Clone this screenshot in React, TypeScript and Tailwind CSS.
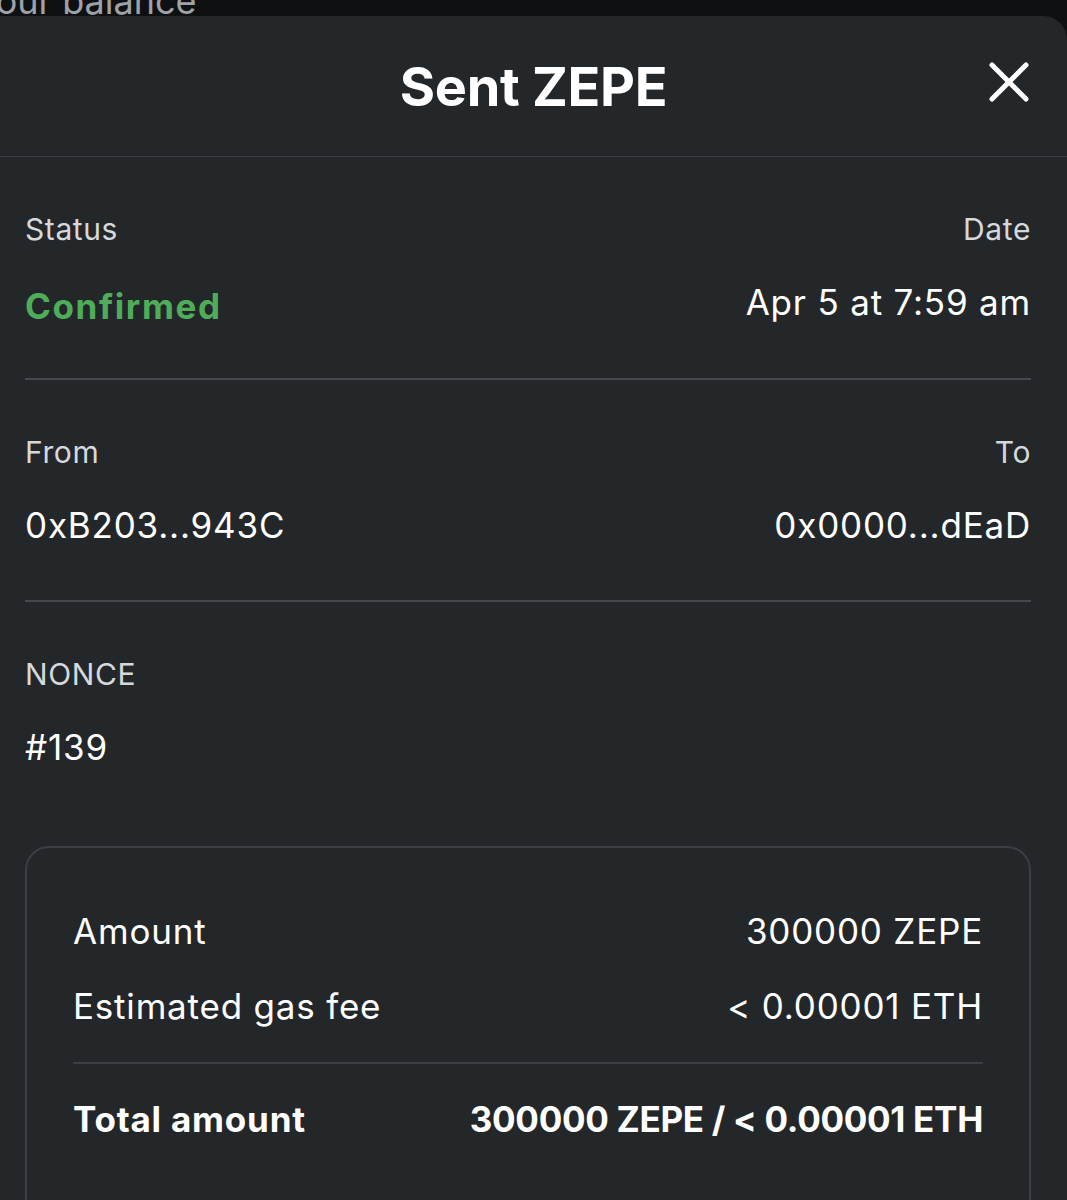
const font = { fontFamily: "Inter, 'Noto Sans', sans-serif" };

function Field({
  label,
  value,
  align = "left",
  valueClass = "text-white font-normal tracking-[0.8px]",
}: {
  label: string;
  value: string;
  align?: "left" | "right";
  valueClass?: string;
}) {
  return (
    <div className={align === "right" ? "flex flex-col items-end" : "flex flex-col items-start"}>
      <div className="h-[40px] leading-[40px] text-[30px] tracking-[0.6px] text-[#d6d9dc]">{label}</div>
      <div className={`mt-[31px] h-[44px] leading-[44px] text-[35px] ${valueClass}`}>{value}</div>
    </div>
  );
}

export default function App() {
  return (
    <div className="w-[1067px] h-[1200px] overflow-hidden bg-[#0f1012]" style={font}>
      {/*Behind the sheet*/}
      <div className="h-[16px] overflow-hidden">
        <div className="-mt-[19px] -ml-[26px] text-[36px] leading-[40px] text-[#9fa3a8]">Your balance</div>
      </div>

      {/*Sheet*/}
      <div className="bg-[#24272a] rounded-tr-[24px] h-[1184px]">
        {/*Header*/}
        <div className="relative h-[141px] flex items-center justify-center border-b border-[#3b3e42]">
          <h1 className="text-[54px] font-bold text-white leading-none mt-[1px] tracking-[-0.3px]">Sent ZEPE</h1>
          <button className="absolute right-[38px] top-[46px] text-white">
            <svg width="40" height="40" viewBox="0 0 40 40" fill="none" stroke="currentColor" strokeWidth="5" strokeLinecap="round">
              <path d="M3 3L37 37M37 3L3 37" />
            </svg>
          </button>
        </div>

        <div className="pl-[25px] pr-[36px]">
          {/*Status & Date*/}
          <div className="flex justify-between pt-[52px] pb-[50px] border-b-2 border-[#45484c]">
            <Field label="Status" value="Confirmed" valueClass="text-[#4fad5a] font-bold tracking-[1.6px] mt-[35px]" />
            <Field label="Date" value="Apr 5 at 7:59 am" align="right" />
          </div>

          {/*From & To*/}
          <div className="flex justify-between pt-[52px] pb-[53px] border-b-2 border-[#45484c]">
            <Field label="From" value="0xB203...943C" />
            <Field label="To" value="0x0000...dEaD" align="right" />
          </div>

          {/*Nonce*/}
          <div className="pt-[52px] pb-[77px]">
            <Field label="NONCE" value="#139" />
          </div>

          {/*Amount box*/}
          <div className="border-2 border-[#3b3e42] rounded-[24px] px-[46px] pt-[61px] pb-[80px] text-[35px] text-white">
            <div className="flex justify-between h-[44px] leading-[44px] tracking-[0.8px]">
              <span>Amount</span>
              <span>300000 ZEPE</span>
            </div>
            <div className="flex justify-between h-[44px] leading-[44px] mt-[31px] tracking-[0.8px]">
              <span>Estimated gas fee</span>
              <span>&lt; 0.00001 ETH</span>
            </div>
            <div className="h-[2px] bg-[#3b3e42] mt-[34px]" />
            <div className="flex justify-between h-[44px] leading-[44px] mt-[33px] font-bold">
              <span className="tracking-[0.8px]">Total amount</span>
              <span className="tracking-[-0.3px]">300000 ZEPE / &lt; 0.00001 ETH</span>
            </div>
          </div>
        </div>
      </div>
    </div>
  );
}
